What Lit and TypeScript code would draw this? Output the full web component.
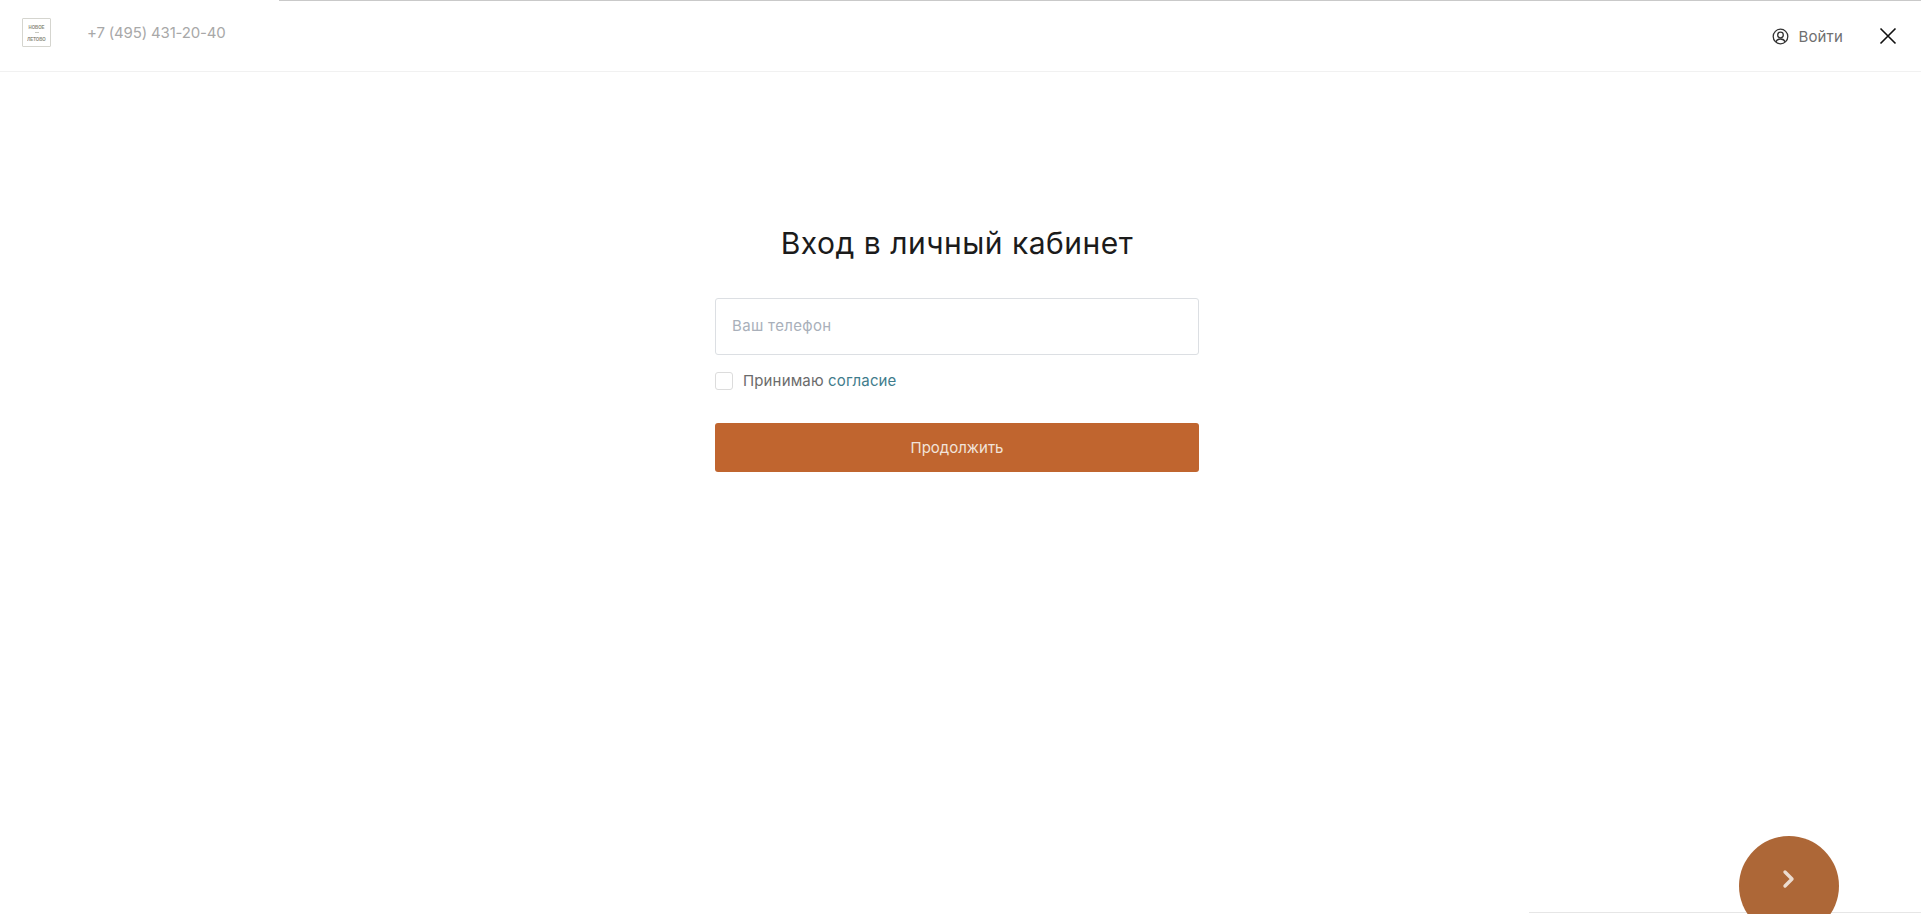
import { LitElement, html, css } from "lit";
import { customElement } from "lit/decorators.js";

@customElement("app-root")
export class AppRoot extends LitElement {
  static styles = css`
    :host { display: block; position: relative; width: 100%; height: 914px; overflow: hidden; background: #fff;
      font-family: "Inter", "Liberation Sans", sans-serif; }
    .topline { position: absolute; top: 0; left: 279px; right: 0; height: 1px; background: #c9c9c9; }
    .botline { position: absolute; bottom: 1px; left: 1529px; right: 0; height: 1px; background: #e6e6e6; }
    header { box-sizing: border-box; height: 72px; border-bottom: 1px solid #f1f1f1; display: flex; align-items: flex-start; padding: 0 24px 0 22px; }
    .logo { box-sizing: border-box; width: 29px; height: 29px; margin-top: 18px; border: 1px solid #d5d5cf; border-radius: 1px; display: flex; flex-direction: column; align-items: center; justify-content: center; color: #8d8d80; font-size: 4.4px; line-height: 5px; font-weight: 700; font-family: "Liberation Sans", sans-serif; }
    .logo span { display: block; transform: scaleY(1.35); }
    .logo i { display: block; width: 4px; height: 1px; margin: 3px 0 3px; background: #c9c9c0; }
    .phone { margin: 24px 0 0 36px; font-size: 15px; line-height: 18px; color: #a8a8a8; letter-spacing: -.17px; }
    .spacer { flex: 1; }
    .login { display: flex; align-items: center; gap: 9px; margin-top: 27px; height: 18px; font-size: 15px; color: #6f6f6f; letter-spacing: .15px; }
    .login svg { display: block; }
    .close { margin: 27px 0 0 36px; display: block; }
    main { display: flex; flex-direction: column; align-items: center; padding-right: 7px; }
    h1 { margin: 153px 0 0; font-size: 30px; line-height: 36px; font-weight: 400; color: #1b1b1b; letter-spacing: .5px; }
    .form { width: 484px; margin-top: 37px; display: flex; flex-direction: column; }
    .input { box-sizing: border-box; height: 57px; border: 1px solid #dcdfe3; border-radius: 3px; padding: 0 0 2px 16px; display: flex; align-items: center; font-size: 15px; letter-spacing: .32px; color: #a9b0ba; }
    .agree { display: flex; align-items: center; gap: 10px; margin-top: 17px; height: 18px; font-size: 15px; letter-spacing: .14px; color: #6b6b6b; }
    .agree .txt { padding-bottom: 2px; }
    .box { box-sizing: border-box; width: 18px; height: 18px; border: 1px solid #dcdcdc; border-radius: 3px; }
    .agree a { color: #3f7c8c; text-decoration: none; }
    .btn { margin-top: 33px; height: 49px; border-radius: 3px; background: #c0652f; color: #f1e3da; display: flex; align-items: center; justify-content: center; font-size: 15px; }
    .fab { position: absolute; left: 1739px; top: 836px; width: 100px; height: 100px; border-radius: 50%; background: #ad6737; display: flex; align-items: center; justify-content: center; }
    .fab svg { display: block; margin-top: -14px; }
  `;

  render() {
    return html`
      <header>
        <div class="logo"><span>НОВОЕ</span><i></i><span>ЛЕТОВО</span></div>
        <div class="phone">+7 (495) 431-20-40</div>
        <div class="spacer"></div>
        <div class="login">
          <svg width="17" height="17" viewBox="0 0 17 17" fill="none" stroke="#333" stroke-width="1.3">
            <circle cx="8.5" cy="8.5" r="7.3"></circle>
            <circle cx="8.5" cy="7" r="2.8"></circle>
            <path d="M3.8 14c.8-2 2.6-3 4.7-3s3.9 1 4.7 3"></path>
          </svg>
          <span>Войти</span>
        </div>
        <svg class="close" width="18" height="18" viewBox="0 0 18 18" fill="none" stroke="#111" stroke-width="1.6">
          <path d="M1.5 1.5l15 15M16.5 1.5l-15 15"></path>
        </svg>
      </header>
      <main>
        <h1>Вход в личный кабинет</h1>
        <div class="form">
          <div class="input">Ваш телефон</div>
          <div class="agree"><span class="box"></span><span class="txt">Принимаю <a>согласие</a></span></div>
          <div class="btn">Продолжить</div>
        </div>
      </main>
      <div class="topline"></div>
      <div class="botline"></div>
      <div class="fab">
        <svg width="14" height="20" viewBox="0 0 14 20" fill="none" stroke="#ecdcd0" stroke-width="3.4" stroke-linecap="round" stroke-linejoin="round">
          <path d="M3 3l7 7-7 7"></path>
        </svg>
      </div>
    `;
  }
}
